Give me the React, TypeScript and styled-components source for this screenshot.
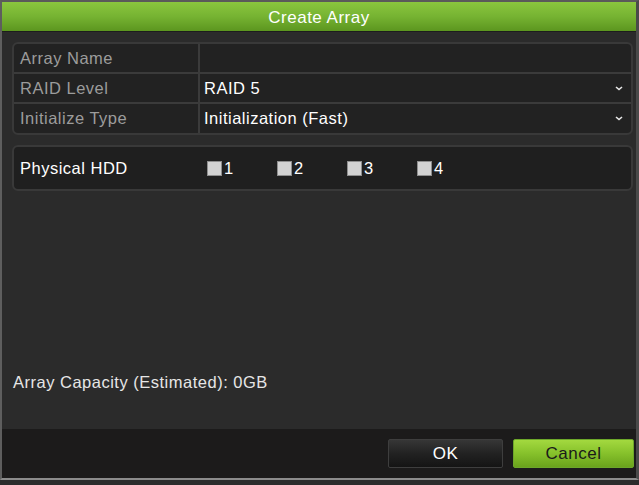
import React, { useState } from 'react'
import styled, { createGlobalStyle } from 'styled-components'

const GlobalStyle = createGlobalStyle`
  html, body {
    margin: 0;
    padding: 0;
    background: #2c2c2c;
  }
  body {
    font-family: 'Liberation Sans', Arial, sans-serif;
    letter-spacing: 0.5px;
  }
`

const Frame = styled.div`
  box-sizing: border-box;
  width: 639px;
  height: 480px;
  display: flex;
  flex-direction: column;
  background: #2b2b2b;
  border-left: 2px solid #5e5e5e;
  border-right: 3px solid #4a4a4a;
  border-top: 2px solid #5a5a5a;
  border-bottom: 2px solid #8c8c8c;
`

const TitleBar = styled.div`
  box-sizing: border-box;
  height: 30px;
  flex: none;
  display: flex;
  align-items: center;
  justify-content: center;
  padding-top: 2px;
  background: linear-gradient(to bottom, #8ac63e 0%, #76b332 50%, #5c961f 100%);
  border-bottom: 1px solid #1d1d1d;
  color: #ffffff;
  font-size: 17px;
`

const Body = styled.div`
  flex: 1;
  display: flex;
  flex-direction: column;
  padding: 10px 3px 0 10px;
`

const Table = styled.div`
  display: grid;
  grid-template-columns: 184px 1fr;
  border: 2px solid #393939;
  border-radius: 6px;
  background: #222222;
  overflow: hidden;
`

const Cell = styled.div<{ $last?: boolean; $value?: boolean }>`
  box-sizing: border-box;
  height: ${({ $last }) => ($last ? '29px' : '30px')};
  display: flex;
  align-items: center;
  justify-content: space-between;
  padding: 0 8px 0 ${({ $value }) => ($value ? '4px' : '6px')};
  border-bottom: ${({ $last }) => ($last ? 'none' : '2px solid #3b3b3b')};
  border-left: ${({ $value }) => ($value ? '2px solid #3b3b3b' : 'none')};
  color: ${({ $value }) => ($value ? '#ffffff' : '#9c9c9c')};
  font-size: 16.5px;
`

const Chevron = () => (
  <svg width="8" height="5" viewBox="0 0 8 5">
    <polyline points="1,1 4,3.5 7,1" fill="none" stroke="#e8e8e8" strokeWidth="1.6" />
  </svg>
)

const HddBox = styled.div`
  box-sizing: border-box;
  margin-top: 10px;
  height: 46px;
  display: flex;
  align-items: center;
  padding: 0 6px;
  border: 2px solid #393939;
  border-radius: 6px;
  background: #1f1f1f;
  color: #ffffff;
  font-size: 16.5px;
`

const HddLabel = styled.span`
  width: 187px;
`

const CheckGroup = styled.div`
  display: flex;
`

const CheckItem = styled.label`
  width: 70px;
  display: flex;
  align-items: center;
  gap: 2px;
  cursor: pointer;
`

const Box = styled.span<{ $on: boolean }>`
  width: 15px;
  height: 15px;
  background: ${({ $on }) => ($on ? '#8ac63e' : '#d2d2d2')};
  border: 1px solid #8e8e8e;
  box-sizing: border-box;
`

const Capacity = styled.div`
  margin-top: auto;
  margin-bottom: 37px;
  margin-left: 1px;
  color: #e6e6e6;
  font-size: 16.5px;
`

const Footer = styled.div`
  height: 49px;
  flex: none;
  display: flex;
  align-items: center;
  justify-content: flex-end;
  gap: 10px;
  padding: 0 2px 0 0;
  background: #1c1b1b;
`

const Button = styled.button<{ $primary?: boolean }>`
  height: 29px;
  width: ${({ $primary }) => ($primary ? '121px' : '115px')};
  font-family: inherit;
  font-size: 17px;
  letter-spacing: 0.5px;
  border-radius: 2px;
  cursor: pointer;
  color: ${({ $primary }) => ($primary ? '#1a1a1a' : '#ffffff')};
  border: 1px solid ${({ $primary }) => ($primary ? '#6da72a' : '#3e3e3e')};
  background: ${({ $primary }) =>
    $primary
      ? 'linear-gradient(to bottom, #a3d93f 0%, #86c12b 50%, #6aa31c 100%)'
      : 'linear-gradient(to bottom, #363636 0%, #222222 50%, #141414 100%)'};
`

const rows = [
  { label: 'Array Name', value: '', select: false },
  { label: 'RAID Level', value: 'RAID 5', select: true },
  { label: 'Initialize Type', value: 'Initialization (Fast)', select: true },
]

export default function App() {
  const [checked, setChecked] = useState<number[]>([])
  const toggle = (n: number) =>
    setChecked((c) => (c.includes(n) ? c.filter((x) => x !== n) : [...c, n]))

  return (
    <>
      <GlobalStyle />
      <Frame>
        <TitleBar>Create Array</TitleBar>
        <Body>
          <Table>
            {rows.map((r, i) => (
              <React.Fragment key={r.label}>
                <Cell $last={i === rows.length - 1}>{r.label}</Cell>
                <Cell $value $last={i === rows.length - 1}>
                  <span>{r.value}</span>
                  {r.select && <Chevron />}
                </Cell>
              </React.Fragment>
            ))}
          </Table>
          <HddBox>
            <HddLabel>Physical HDD</HddLabel>
            <CheckGroup>
              {[1, 2, 3, 4].map((n) => (
                <CheckItem key={n} onClick={() => toggle(n)}>
                  <Box $on={checked.includes(n)} />
                  {n}
                </CheckItem>
              ))}
            </CheckGroup>
          </HddBox>
          <Capacity>Array Capacity (Estimated): 0GB</Capacity>
        </Body>
        <Footer>
          <Button>OK</Button>
          <Button $primary>Cancel</Button>
        </Footer>
      </Frame>
    </>
  )
}
